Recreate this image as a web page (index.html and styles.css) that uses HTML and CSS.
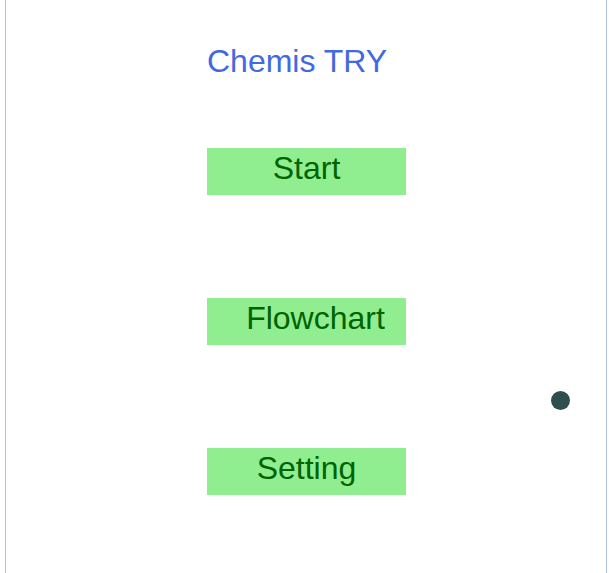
FILE: index.html
```html
<!DOCTYPE html>
<html>
<head>
<meta charset="utf-8">
<link rel="stylesheet" href="styles.css">
</head>
<body>
<div class="screen">
  <div class="menu">
    <h1 class="title">Chemis TRY</h1>
    <div class="btn">Start</div>
    <div class="btn btn-shift">Flowchart</div>
    <div class="btn">Setting</div>
  </div>
  <span class="dot"></span>
</div>
</body>
</html>
```
FILE: styles.css
```css
html, body {
  margin: 0;
  padding: 0;
  background: #ffffff;
}
body {
  font-family: "Liberation Sans", Arial, sans-serif;
  overflow: hidden;
}
.screen {
  position: relative;
  margin-left: 5px;
  width: 600px;
  height: 640px;
  border-left: 1px solid #b0c4de;
  border-right: 1px solid #b0c4de;
}
.menu {
  display: flex;
  flex-direction: column;
  align-items: flex-start;
  padding-left: 201px;
  padding-top: 43px;
}
.title {
  margin: 0;
  font-size: 32px;
  font-weight: normal;
  line-height: 36px;
  color: #4169e1;
}
.btn {
  box-sizing: border-box;
  width: 199px;
  height: 47px;
  padding-top: 3px;
  margin-top: 103px;
  background: #90ee90;
  color: #006400;
  font-size: 32px;
  line-height: 34px;
  text-align: center;
}
.menu .btn:first-of-type {
  margin-top: 69px;
}
.btn-shift {
  padding-left: 18px;
}
.dot {
  position: absolute;
  left: 545px;
  top: 391px;
  width: 19px;
  height: 19px;
  border-radius: 50%;
  background: #2f4f4f;
}
```
